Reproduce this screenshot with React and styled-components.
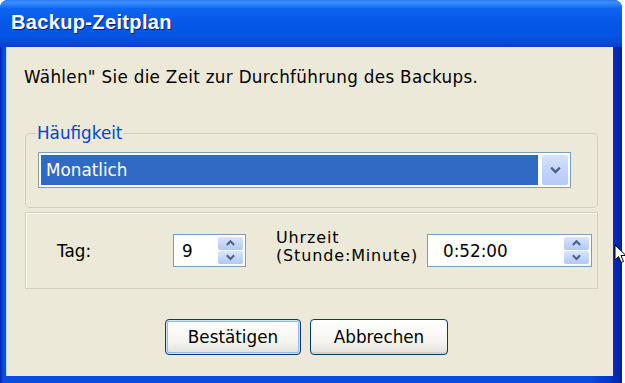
import React from 'react'
import styled, { createGlobalStyle } from 'styled-components'

const GlobalStyle = createGlobalStyle`
  html, body {
    margin: 0;
    padding: 0;
    background: #ffffff;
  }
  body {
    font-family: "DejaVu Sans", "Liberation Sans", sans-serif;
  }
`

const Chevron = ({ dir = 'down', size = 12, color = '#4D6185' }) => (
    <svg width={size} height={size * 0.75} viewBox="0 0 12 9">
        {dir === 'down'
            ? <path d="M2 2.5 L6 6.5 L10 2.5" fill="none" stroke={color} strokeWidth="2.2" />
            : <path d="M2 6.5 L6 2.5 L10 6.5" fill="none" stroke={color} strokeWidth="2.2" />}
    </svg>
)

const App = () => {
    return (
        <Page>
            <GlobalStyle />
            <Window>
                <TitleBar>Backup-Zeitplan</TitleBar>
                <Frame>
                    <Body>
                        <Prompt>Wählen" Sie die Zeit zur Durchführung des Backups.</Prompt>

                        <Group>
                            <Legend>Häufigkeit</Legend>
                            <Combo>
                                <ComboValue>Monatlich</ComboValue>
                                <DropButton>
                                    <Chevron dir="down" size={13} />
                                </DropButton>
                            </Combo>
                        </Group>

                        <Panel>
                            <TagLabel>Tag:</TagLabel>
                            <Spinner width={73}>
                                <SpinValue>9</SpinValue>
                                <SpinButtons>
                                    <SpinHalf><Chevron dir="up" size={11} /></SpinHalf>
                                    <SpinHalf><Chevron dir="down" size={11} /></SpinHalf>
                                </SpinButtons>
                            </Spinner>
                            <TimeLabel>
                                <span>Uhrzeit</span>
                                <span>(Stunde:Minute)</span>
                            </TimeLabel>
                            <Spinner width={165}>
                                <SpinValue pad={15}>0:52:00</SpinValue>
                                <SpinButtons>
                                    <SpinHalf><Chevron dir="up" size={11} /></SpinHalf>
                                    <SpinHalf><Chevron dir="down" size={11} /></SpinHalf>
                                </SpinButtons>
                            </Spinner>
                        </Panel>

                        <ButtonRow>
                            <Button $default>Bestätigen</Button>
                            <Button>Abbrechen</Button>
                        </ButtonRow>
                    </Body>
                </Frame>
            </Window>
            <Cursor width="13" height="20" viewBox="0 0 13 20">
                <path d="M1 1 L1 16 L4.5 12.5 L7 18.5 L9.5 17.5 L7 11.5 L12 11.5 Z" fill="#fff" stroke="#000" strokeWidth="1" />
            </Cursor>
        </Page>
    )
}

// styled components
const Page = styled.div`
    position: relative;
    width: 625px;
    height: 383px;
    overflow: hidden;
    background: #ffffff;
`

const Window = styled.div`
    width: 622px;
    height: 383px;
    display: flex;
    flex-direction: column;
    border-radius: 8px 8px 0 0;
    overflow: hidden;
    background: #0A3FD6;
`

const TitleBar = styled.div`
    height: 47px;
    flex-shrink: 0;
    display: flex;
    align-items: center;
    padding: 0 0 2px 11px;
    box-sizing: border-box;
    background: linear-gradient(
        180deg,
        #2E7CF5 0%,
        #3A8EFF 6%,
        #0F66EE 18%,
        #0558E8 45%,
        #0554E3 75%,
        #0849D6 92%,
        #0A3EC4 100%
    );
    color: #ffffff;
    font-family: "Liberation Sans", Arial, sans-serif;
    font-weight: bold;
    font-size: 20px;
    letter-spacing: 0.35px;
    text-shadow: 1px 1px 0 #0A1A80;
`

const Frame = styled.div`
    flex: 1;
    display: flex;
    padding: 0 9px 7px 6px;
    background: linear-gradient(90deg, #0021B8 0px, #0A4BE0 3px, #0A4BE0 95%, #0036C8 98%, #001F9E 100%);
`

const Body = styled.div`
    flex: 1;
    display: flex;
    flex-direction: column;
    background: #ECE9D8;
    border-left: 1px solid #C5D7F7;
    padding: 0 15px 0 18px;
    color: #000000;
`

const Prompt = styled.div`
    margin: 21px 0 0 -1px;
    font-size: 16.8px;
    letter-spacing: 0.3px;
    line-height: 18px;
    white-space: nowrap;
`

const Group = styled.fieldset`
    margin: 37px 0 0 0;
    padding: 9px 12px 19px 12px;
    border: 1px solid #D0D0BF;
    border-radius: 5px;
    min-width: 0;
`

const Legend = styled.legend`
    padding: 0 1px;
    margin-left: -2px;
    color: #0046D5;
    font-size: 16.8px;
    line-height: 20px;
`

const Combo = styled.div`
    width: 533px;
    height: 36px;
    box-sizing: border-box;
    border: 1px solid #7F9DB9;
    background: #ffffff;
    padding: 2px;
    display: flex;
    gap: 4px;
`

const ComboValue = styled.div`
    flex: 1;
    background: #316AC5;
    color: #ffffff;
    font-size: 16.8px;
    display: flex;
    align-items: center;
    padding-left: 5px;
`

const DropButton = styled.div`
    width: 26px;
    display: flex;
    align-items: center;
    justify-content: center;
    background: linear-gradient(180deg, #D6E3FD 0%, #C3D4FB 50%, #B5C9F8 100%);
    border-radius: 2px;
`

const Panel = styled.div`
    margin-top: 4px;
    height: 77px;
    box-sizing: border-box;
    border: 1px solid #D0D0BF;
    box-shadow: inset 1px 1px 0 #ffffff;
    display: flex;
    align-items: center;
    padding: 0 0 0 31px;
`

const TagLabel = styled.div`
    width: 116px;
    font-size: 16.8px;
`

const Spinner = styled.div`
    width: ${p => p.width}px;
    height: 33px;
    box-sizing: border-box;
    border: 1px solid #7F9DB9;
    background: #ffffff;
    display: flex;
    align-items: stretch;
    padding: 2px 2px 2px 0;
`

const SpinValue = styled.div`
    flex: 1;
    display: flex;
    align-items: center;
    padding-left: ${p => p.pad || 8}px;
    font-size: 16.8px;
`

const SpinButtons = styled.div`
    width: 25px;
    display: flex;
    flex-direction: column;
    gap: 1px;
`

const SpinHalf = styled.div`
    flex: 1;
    display: flex;
    align-items: center;
    justify-content: center;
    background: linear-gradient(180deg, #D9E5FD 0%, #C1D3FB 60%, #B4C8F7 100%);
    border-radius: 2px;
`

const TimeLabel = styled.div`
    margin: -8px 0 0 30px;
    width: 151px;
    display: flex;
    flex-direction: column;
    font-size: 16px;
    letter-spacing: 0.85px;
    line-height: 18px;
    white-space: nowrap;
`

const ButtonRow = styled.div`
    margin-top: 30px;
    display: flex;
    gap: 9px;
    padding-left: 140px;
`

const Button = styled.button`
    width: ${p => (p.$default ? 136 : 138)}px;
    height: 36px;
    border: 1px solid #003C74;
    border-radius: 4px;
    background: linear-gradient(180deg, #FFFFFF 0%, #F6F5F0 60%, #E3E1D8 100%);
    box-shadow: ${p => (p.$default
        ? 'inset 0 0 0 1px #CEE7FF, inset 0 0 0 2px #98B8EA'
        : 'inset 0 -2px 0 #D6D0C5')};
    font-family: "DejaVu Sans", sans-serif;
    font-size: 16.8px;
    color: #000000;
    padding: 0;
`

const Cursor = styled.svg`
    position: absolute;
    left: 614px;
    top: 244px;
`

export default App
